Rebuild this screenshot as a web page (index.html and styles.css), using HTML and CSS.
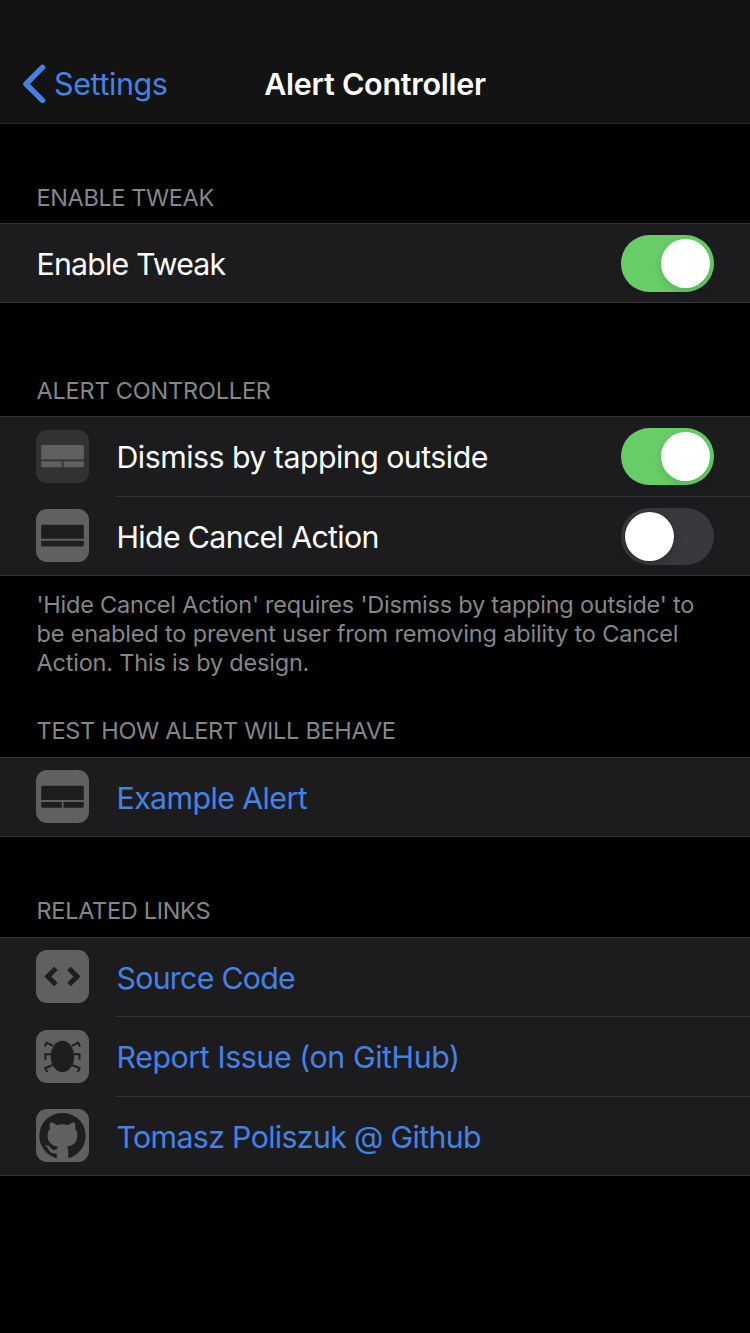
FILE: index.html
```html
<!DOCTYPE html>
<html lang="en">
<head>
<meta charset="utf-8">
<title>Alert Controller</title>
<link rel="stylesheet" href="styles.css">
</head>
<body>
<header class="nav">
  <a class="back">
    <svg class="chevron" width="24" height="40" viewBox="0 0 24 40"><path d="M20.500 3.400 4 20l16.500 16.400" /></svg>
    <span class="back-label">Settings</span>
  </a>
  <h1 class="title">Alert Controller</h1>
</header>
<main>
  <h2 class="heading h-enable">ENABLE TWEAK</h2>
  <section class="group">
    <div class="row"><div class="cell"><span class="label t-enable">Enable Tweak</span><span class="switch on"><i class="knob"></i></span></div></div>
  </section>

  <h2 class="heading h-alert">ALERT CONTROLLER</h2>
  <section class="group double">
    <div class="row">
      <svg class="icon" viewBox="0 0 53 53"><rect class="dim" width="53" height="53" rx="11"/><path class="plate" d="M6.500 15h40q1.300 0 1.300 1.500v13H5.200v-13q0-1.500 1.300-1.500zM5.200 31.200h20.600v6H6.500q-1.300 0-1.300-1.300zM27.500 31.200h20.300v4.700q0 1.300-1.300 1.300h-19z"/></svg>
      <div class="cell"><span class="label t-dismiss">Dismiss by tapping outside</span><span class="switch on"><i class="knob"></i></span></div>
    </div>
    <div class="row">
      <svg class="icon" viewBox="0 0 53 53"><rect class="plate" width="53" height="53" rx="11"/><path class="cut" d="M6.500 15.700h40q1.300 0 1.300 1.500v12.600H5.200V17.200q0-1.500 1.300-1.500zM5.200 31.800h42.600v4.500q0 1.300-1.300 1.300h-40q-1.300 0-1.300-1.300z"/></svg>
      <div class="cell"><span class="label t-hide">Hide Cancel Action</span><span class="switch"><i class="knob"></i></span></div>
    </div>
  </section>
  <p class="note"><span class="n1">'Hide Cancel Action' requires 'Dismiss by tapping outside' to</span><br><span class="n2">be enabled to prevent user from removing ability to Cancel</span><br><span class="n3">Action. This is by design.</span></p>

  <h2 class="heading h-test">TEST HOW ALERT WILL BEHAVE</h2>
  <section class="group">
    <div class="row">
      <svg class="icon" viewBox="0 0 53 53"><rect class="plate" width="53" height="53" rx="11"/><path class="cut" d="M6.500 15.800h40q1.300 0 1.300 1.500v12.800H5.200V17.300q0-1.500 1.300-1.500zM5.200 32h20.600v5.700H6.500q-1.300 0-1.300-1.300zM27.500 32h20.300v4.400q0 1.300-1.300 1.300h-19z"/></svg>
      <div class="cell"><span class="label link t-example">Example Alert</span></div>
    </div>
  </section>

  <h2 class="heading h-links">RELATED LINKS</h2>
  <section class="group triple">
    <div class="row">
      <svg class="icon" viewBox="0 0 53 53"><rect class="plate" width="53" height="53" rx="11"/><path class="angle" d="M19.800 18.600 11.800 26.600 19.800 34.600M33 18.600 41 26.600 33 34.600"/></svg>
      <div class="cell"><span class="label link t-source">Source Code</span></div>
    </div>
    <div class="row">
      <svg class="icon" viewBox="0 0 53 53"><rect class="plate" width="53" height="53" rx="11"/><ellipse class="cut" cx="26.400" cy="26.500" rx="11.700" ry="15.700"/><path class="legs" d="M17 15.800 10.600 12.700 8.800 16.700M35.800 15.800 42.200 12.700 44 16.700M15 24.200H9.300V29.800M37.800 24.200H43.500V29.800M17 35 9.200 38.100 11.200 42.100M35.800 35 43.600 38.100 41.600 42.100"/></svg>
      <div class="cell"><span class="label link t-report">Report Issue (on GitHub)</span></div>
    </div>
    <div class="row">
      <svg class="icon" viewBox="0 0 53 53"><rect class="plate" width="53" height="53" rx="11"/><path class="cut" d="M26.500 3.900A23 23 0 0 0 20.700 49.200V44.200C15.500 45.200 13.800 43 12.500 40.300 11.700 38.700 10.700 37.700 9.300 36.700 11.600 35.800 13.300 36.800 14.600 38.800 16 41 17.600 41.400 20.800 40.500 21 39.300 21.500 38.400 22.300 37.700 15.500 36.700 11.600 33.500 11.600 26.200 11.600 23.500 12.400 21.600 14 19.800 13.400 17.800 13.500 15.500 14.300 13.300 16.300 13.300 18.600 14.500 20.700 16 24.500 15 28.500 15 32.300 16 34.400 14.500 36.700 13.300 38.700 13.300 39.500 15.500 39.600 17.800 39 19.800 40.600 21.600 41.400 23.500 41.400 26.200 41.400 33.500 37.500 36.700 30.700 37.700 31.800 38.700 32.300 40 32.300 42V49.200A23 23 0 0 0 26.500 3.900Z"/></svg>
      <div class="cell"><span class="label link t-tomasz">Tomasz Poliszuk @ Github</span></div>
    </div>
  </section>
</main>
</body>
</html>
```
FILE: styles.css
```css
* { box-sizing: border-box; }
body {
  margin: 0;
  min-height: 1333px;
  background: #000;
  color: #fff;
  font-family: Inter, "Liberation Sans", sans-serif;
  overflow-x: hidden;
}
.nav {
  height: 124px;
  padding: 44px 22px 0;
  display: grid;
  grid-template-columns: 1fr auto 1fr;
  align-items: center;
  background: #131313;
  border-bottom: 1px solid #252526;
}
.back { display: flex; align-items: center; gap: 8px; color: #4482e6; }
.chevron { fill: none; stroke: #4482e6; stroke-width: 5.5; stroke-linecap: round; stroke-linejoin: round; }
.back-label { font-size: 30.5px; letter-spacing: -.4px; }
.title { margin: 0; font-size: 30.5px; font-weight: 600; letter-spacing: -.26px; white-space: nowrap; }
.heading {
  margin: 0;
  height: 99px;
  padding: 0 36.5px 12px;
  display: flex;
  align-items: flex-end;
  font-size: 23.5px;
  line-height: 28px;
  font-weight: 400;
  color: #86868a;
}
.h-enable { padding-bottom: 11px; letter-spacing: -.38px; }
.h-alert { height: 113px; padding-bottom: 11px; letter-spacing: -.2px; }
.h-test { height: 80px; letter-spacing: -.28px; }
.h-links { height: 100px; letter-spacing: -.3px; }
.group {
  display: grid;
  height: 80px;
  background: #1c1c1e;
  border-top: 1px solid #343436;
  border-bottom: 1px solid #343436;
}
.double { height: 160px; grid-template-rows: 80px 78px; }
.triple { height: 239px; grid-template-rows: 79px 80px 78px; }
.row { display: flex; align-items: center; padding-left: 36px; }
.icon { width: 53px; height: 53px; margin: 0 27px 1px 0; flex: none; }
.triple .row:first-child .icon { margin-bottom: 2px; }
.cell {
  flex: 1;
  align-self: stretch;
  display: flex;
  align-items: center;
  justify-content: space-between;
  padding-right: 36px;
}
.row:not(:last-child) .cell { border-bottom: 1px solid #343436; }
.double .row:last-child .cell { padding-top: 1px; }
.label { padding: 1px 0 0 .5px; font-size: 30.3px; line-height: 40px; white-space: nowrap; }
.t-enable { letter-spacing: -.82px; }
.t-dismiss { letter-spacing: -.52px; }
.t-hide { letter-spacing: -.65px; }
.t-example { letter-spacing: -.58px; }
.t-source { letter-spacing: -.72px; }
.t-report { letter-spacing: -.4px; }
.t-tomasz { letter-spacing: -.65px; }
.link { color: #4482e6; }
.switch { width: 93px; height: 57px; padding: 4px; border-radius: 29px; background: #39393d; display: flex; }
.switch.on { background: #67ce67; justify-content: flex-end; }
.knob { width: 49px; height: 49px; border-radius: 50%; background: #fff; box-shadow: 0 2px 8px rgba(0, 0, 0, .18), 0 0 1px #000; }
.on .knob { box-shadow: 0 3px 8px rgba(0, 0, 0, .15); }
.note {
  margin: 0;
  height: 101px;
  padding: 14px 36.5px 0;
  font-size: 23.5px;
  line-height: 29px;
  color: #86868a;
  white-space: nowrap;
}
.n1 { letter-spacing: -.22px; }
.n2 { letter-spacing: -.16px; }
.n3 { letter-spacing: -.2px; }
.plate { fill: #606060; }
.dim { fill: #323234; }
.cut { fill: #1e1e20; }
.angle { fill: none; stroke: #1e1e20; stroke-width: 5; }
.legs { fill: none; stroke: #1e1e20; stroke-width: 2; }
```
